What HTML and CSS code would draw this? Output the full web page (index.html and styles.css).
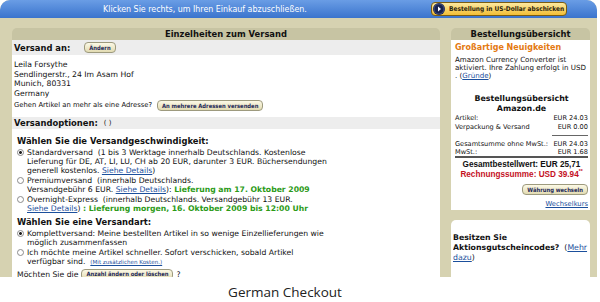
FILE: index.html
```html
<!DOCTYPE html>
<html lang="de">
<head>
  <meta charset="UTF-8" />
  <title>German Checkout</title>
  <link rel="stylesheet" href="styles.css">
</head>
<body>
  <div class="checkout">
    <!-- Top bar -->
    <div class="topbar">
      <span class="topbar-text">Klicken Sie rechts, um Ihren Einkauf abzuschließen.</span>
      <button class="order-btn">
        <span class="play">
          <svg width="12" height="12" viewBox="0 0 12 12"><circle cx="6" cy="6" r="6" fill="#17224f"/><circle cx="6" cy="6" r="5" fill="none" stroke="#5a6aa0" stroke-width="0.6"/><path d="M5 3.6 L8 6 L5 8.4 Z" fill="#fff"/></svg>
        </span>
        Bestellung in US-Dollar abschicken
      </button>
    </div>

    <div class="columns">
      <!-- Shipping details -->
      <section class="main">
        <div class="panel-head">Einzelheiten zum Versand</div>
        <div class="row gray ship-to">
          <b>Versand an:</b>
          <button class="btn">Ändern</button>
        </div>
        <div class="address">
          Leila Forsythe<br>
          Sendlingerstr., 24 Im Asam Hof<br>
          Munich, 80331<br>
          Germany
          <div class="multi">
            Gehen Artikel an mehr als eine Adresse?
            <button class="btn">An mehrere Adressen versenden</button>
          </div>
        </div>
        <div class="row gray options-head">
          <b>Versandoptionen:</b> <span class="paren">( )</span>
        </div>
        <div class="options">
          <h3>Wählen Sie die Versandgeschwindigkeit:</h3>
          <label class="opt">
            <input type="radio" name="speed" checked>
            <span>Standardversand &nbsp;(1 bis 3 Werktage innerhalb Deutschlands. Kostenlose<br>
            Lieferung für DE, AT, LI, LU, CH ab 20 EUR, darunter 3 EUR. Büchersendungen<br>
            generell kostenlos. <a href="#">Siehe Details</a>)</span>
          </label>
          <label class="opt">
            <input type="radio" name="speed">
            <span>Premiumversand &nbsp;(innerhalb Deutschlands.<br>
            Versandgebühr 6 EUR. <a href="#">Siehe Details</a>): <b class="green">Lieferung am 17. Oktober 2009</b></span>
          </label>
          <label class="opt">
            <input type="radio" name="speed">
            <span>Overnight-Express &nbsp;(innerhalb Deutschlands. Versandgebühr 13 EUR.<br>
            <a href="#">Siehe Details</a>) <b class="green">: Lieferung morgen, 16. Oktober 2009 bis 12:00 Uhr</b></span>
          </label>

          <h3 class="second">Wählen Sie eine Versandart:</h3>
          <label class="opt">
            <input type="radio" name="mode" checked>
            <span>Komplettversand: Meine bestellten Artikel in so wenige Einzellieferungen wie<br>
            möglich zusammenfassen</span>
          </label>
          <label class="opt">
            <input type="radio" name="mode">
            <span>Ich möchte meine Artikel schneller. Sofort verschicken, sobald Artikel<br>
            verfügbar sind. &nbsp;<a href="#" class="tiny">(Mit zusätzlichen Kosten.)</a></span>
          </label>
          <div class="qty">Möchten Sie die <button class="btn">Anzahl ändern oder löschen</button>?</div>
        </div>
      </section>

      <!-- Order summary -->
      <aside class="side">
        <div class="panel-head">Bestellungsübersicht</div>
        <div class="summary">
          <div class="news">Großartige Neuigkeiten</div>
          <p class="note">Amazon Currency Converter ist<br>aktiviert. Ihre Zahlung erfolgt in USD<br>. (<a href="#">Gründe</a>)</p>
          <div class="sum-title">Bestellungsübersicht<br>Amazon.de</div>
          <div class="line"><span>Artikel:</span><span>EUR 24.03</span></div>
          <div class="line"><span>Verpackung &amp; Versand</span><span>EUR 0.00</span></div>
          <div class="rule-short"></div>
          <div class="line tight"><span>Gesamtsumme ohne MwSt.:</span><span>EUR 24.03</span></div>
          <div class="line tight"><span>MwSt.:</span><span>EUR 1.68</span></div>
          <div class="rule"></div>
          <div class="total">Gesamtbestellwert: EUR 25,71</div>
          <div class="total red">Rechnungssumme: USD 39.94<sup>**</sup></div>
          <div class="right change"><button class="btn">Währung wechseln</button></div>
          <div class="right rate-row"><a href="#" class="rate">Wechselkurs</a></div>
        </div>
        <div class="promo">
          <div class="promo-text"><b>Besitzen Sie<br>Aktionsgutscheincodes?</b> &nbsp;(<a href="#">Mehr<br>dazu</a>)</div>
        </div>
      </aside>
    </div>
  </div>

  <p class="caption">German Checkout</p>
</body>
</html>
```

FILE: styles.css
```css
body {
  margin: 0;
  background: #fff;
  font-family: "DejaVu Sans", Verdana, sans-serif;
  font-size: 7.7px;
  color: #111;
}

.checkout {
  width: 597px;
  height: 277px;
  background: #d6d2b1;
  border-radius: 10px 10px 0 0;
  overflow: hidden;
}

.topbar {
  height: 18px;
  background: linear-gradient(#6a9de5, #3a74cd);
  display: flex;
  align-items: center;
  color: #fff;
}

.topbar-text {
  font-family: "DejaVu Sans Condensed", "DejaVu Sans", sans-serif;
  font-size: 8.8px;
  margin-left: 103px;
}

.order-btn {
  margin-left: auto;
  margin-right: 30px;
  height: 14px;
  width: 136px;
  padding: 0 0 0 1px;
  display: flex;
  align-items: center;
  gap: 4px;
  border: 1px solid #7a5c12;
  border-radius: 4px;
  background: linear-gradient(#fde9a0, #f2be35);
  font-family: "DejaVu Sans Condensed", "DejaVu Sans", sans-serif;
  font-weight: bold;
  font-size: 6.5px;
  color: #2a2410;
}

.play {
  display: flex;
}

.columns {
  display: flex;
  gap: 11px;
  padding: 10px 7px 0 12px;
}

.main {
  width: 428px;
}

.side {
  width: 139px;
}

.panel-head {
  height: 12px;
  line-height: 12px;
  background: #c7c4a3;
  border-radius: 5px 5px 0 0;
  text-align: center;
  font-weight: bold;
  font-size: 8.4px;
}

.row {
  display: flex;
  align-items: center;
  gap: 14px;
  padding: 0 2px;
}

.gray {
  background: #ededed;
}

.row b {
  font-size: 8.4px;
}

.ship-to {
  height: 15px;
}

.options-head {
  height: 12px;
  gap: 6px;
}

.paren {
  font-size: 7px;
}

.btn {
  font-family: "DejaVu Sans Condensed", "DejaVu Sans", sans-serif;
  font-weight: bold;
  font-size: 5.8px;
  color: #1d2857;
  height: 11px;
  padding: 0 4px;
  border: 1px solid #9d9a7e;
  border-radius: 4px;
  background: linear-gradient(#fcf9e6, #e2dbb2);
}

.address {
  background: #fff;
  box-sizing: border-box;
  height: 62px;
  padding: 5px 2px 0;
  line-height: 9.7px;
}

.multi {
  display: flex;
  align-items: center;
  gap: 5px;
  height: 12px;
  margin-top: 1px;
  font-size: 6.8px;
}

.options {
  background: #fff;
  box-sizing: border-box;
  height: 150px;
  padding: 7px 4px 0 5px;
  line-height: 9px;
}

.options h3 {
  margin: 0 0 1.5px;
  font-size: 8.4px;
  line-height: 10px;
}

.options h3.second {
  margin-top: 4.5px;
  margin-bottom: 2px;
}

.opt {
  display: flex;
  align-items: flex-start;
  gap: 3px;
  margin-bottom: 1px;
}

.opt input {
  appearance: none;
  width: 7px;
  height: 7px;
  margin: 1px 0 0 0;
  border: 1px solid #8a8a8a;
  border-radius: 50%;
  background: #fff;
  flex-shrink: 0;
}

.opt input:checked {
  background: radial-gradient(#222 35%, #fff 45%);
}

a {
  color: #1b4f9c;
}

.tiny {
  font-size: 5.6px;
}

.green {
  color: #2b9a17;
}

.qty {
  display: flex;
  align-items: center;
  gap: 3px;
  height: 12px;
  margin-top: 1px;
}

.summary {
  background: #fff;
  box-sizing: border-box;
  height: 170px;
  padding: 3px 2px 0 4px;
  font-size: 6.6px;
}

.news {
  color: #e47911;
  font-weight: bold;
  font-size: 8px;
  line-height: 10px;
}

.note {
  margin: 3px 0 0;
  font-size: 7.1px;
  line-height: 8px;
  white-space: nowrap;
}

.sum-title {
  margin-top: 14px;
  text-align: center;
  font-weight: bold;
  font-size: 7.9px;
  line-height: 10px;
}

.line {
  display: flex;
  justify-content: space-between;
  line-height: 9px;
}

.line.tight {
  line-height: 8px;
}

.rule-short {
  border-top: 1px solid #666;
  width: 36px;
  margin: 3px 0 4px auto;
}

.rule {
  border-top: 2px solid #555;
  margin: 0 0 2px;
}

.total {
  text-align: center;
  font-family: "Liberation Sans", Arial, sans-serif;
  font-weight: bold;
  font-size: 8.2px;
  line-height: 10px;
}

.red {
  color: #c4111e;
}

.red sup {
  font-size: 5px;
  line-height: 0;
}

.right {
  text-align: right;
}

.change {
  margin-top: 4px;
  height: 11px;
}

.rate-row {
  margin-top: 5px;
  line-height: 9px;
}

.rate {
  font-size: 6.8px;
}

.promo {
  margin-top: 10px;
  background: #fff;
  border-radius: 5px 5px 0 0;
  height: 60px;
  padding: 13px 0 0 2px;
}

.promo-text {
  height: 31px;
  overflow: hidden;
  white-space: nowrap;
  line-height: 10px;
  font-size: 7.8px;
}

.caption {
  margin: 6px 0 0;
  width: 570px;
  text-align: center;
  font-family: "Open Sans", sans-serif;
  font-size: 13.5px;
  color: #222;
}
```
